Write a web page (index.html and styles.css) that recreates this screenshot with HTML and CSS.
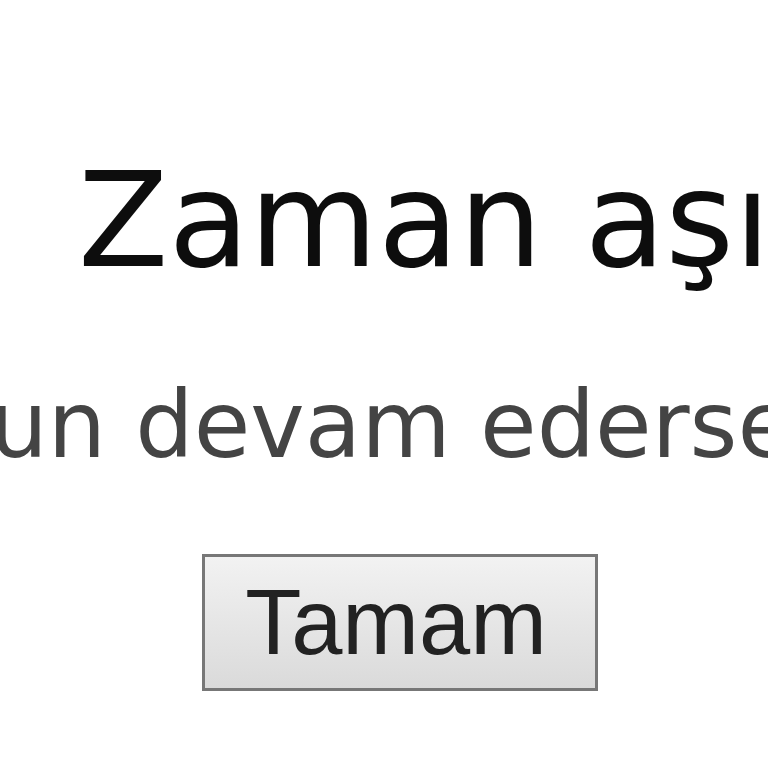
FILE: index.html
```html
<!DOCTYPE html>
<html lang="tr">
<head>
<meta charset="utf-8">
<link rel="stylesheet" href="styles.css">
</head>
<body>
<div class="dialog">
  <h1 class="title">Zaman aşımı</h1>
  <p class="message">Sorun devam ederse yeniden deneyin</p>
  <div class="actions">
    <button class="btn" type="button">Tamam</button>
  </div>
</div>
</body>
</html>
```
FILE: styles.css
```css
html, body {
  margin: 0;
  padding: 0;
  background: #ffffff;
  overflow: hidden;
  width: 768px;
  height: 768px;
}
.dialog {
  width: 768px;
  padding-top: 150px;
  display: flex;
  flex-direction: column;
}
.title {
  margin: 0;
  padding-left: 78px;
  font-family: "DejaVu Sans", sans-serif;
  font-weight: normal;
  font-size: 132px;
  line-height: 140px;
  color: #0d0d0d;
  white-space: nowrap;
}
.message {
  margin: 81px 0 0 -163px;
  font-family: "DejaVu Sans", sans-serif;
  font-size: 92px;
  line-height: 110px;
  color: #444444;
  white-space: nowrap;
}
.actions {
  display: flex;
  padding-left: 202px;
  margin-top: 73px;
}
.btn {
  width: 396px;
  height: 137px;
  box-sizing: border-box;
  border: 3px solid #777777;
  border-radius: 0;
  background: linear-gradient(#f2f2f2, #dadada);
  font-family: "Liberation Sans", Arial, sans-serif;
  font-size: 92px;
  color: #222222;
  padding: 0 8px 0 0;
}
```
